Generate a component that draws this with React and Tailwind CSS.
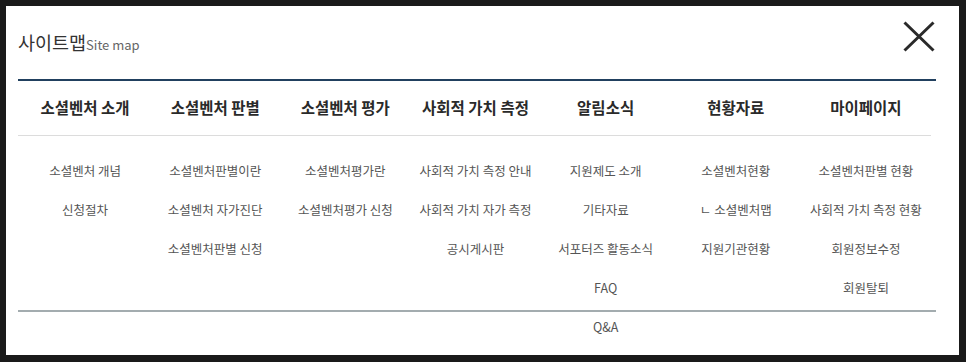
import React from "react";

const cols = [
  { title: "소셜벤처 소개", items: ["소셜벤처 개념", "신청절차"] },
  { title: "소셜벤처 판별", items: ["소셜벤처판별이란", "소셜벤처 자가진단", "소셜벤처판별 신청"] },
  { title: "소셜벤처 평가", items: ["소셜벤처평가란", "소셜벤처평가 신청"] },
  { title: "사회적 가치 측정", items: ["사회적 가치 측정 안내", "사회적 가치 자가 측정", "공시게시판"] },
  { title: "알림소식", items: ["지원제도 소개", "기타자료", "서포터즈 활동소식", "FAQ", "Q&A"] },
  { title: "현황자료", items: ["소셜벤처현황", "ㄴ 소셜벤처맵", "지원기관현황"] },
  { title: "마이페이지", items: ["소셜벤처판별 현황", "사회적 가치 측정 현황", "회원정보수정", "회원탈퇴"] },
];

export default function App() {
  return (
    <div
      className="w-[966px] h-[362px] bg-[#1a1a1a] pt-[6px] pl-[6px]"
      style={{ fontFamily: '"Noto Sans CJK KR", "Noto Sans", sans-serif' }}
    >
      <div className="w-[953px] h-[349px] bg-white pl-[12px] pr-[23px] flex flex-col">
        <div className="h-[73px] flex items-start justify-between">
          <div className="mt-[27px] flex items-baseline text-[#333]">
            <span className="text-[18.5px] leading-none">사이트맵</span>
            <span className="text-[13px] leading-none text-[#666]">Site map</span>
          </div>
          <svg className="mt-[15px] mr-[1px]" width="32" height="31" viewBox="0 0 32 31">
            <path d="M1.5 1.5 L30.5 29.5 M30.5 1.5 L1.5 29.5" stroke="#2a2a2a" strokeWidth="3" fill="none" />
          </svg>
        </div>
        <div className="border-t-2 border-[#21405f]">
          <div className="mr-[5px] border-b border-[#dcdcdc] grid grid-cols-7 pl-[2px] h-[55px] items-center">
            {cols.map((c) => (
              <div key={c.title} className="text-center text-[15.5px] font-bold text-[#2a2a2a] leading-none">
                {c.title}
              </div>
            ))}
          </div>
          <div className="h-[176px] border-b-2 border-[#a3acaf] grid grid-cols-7 pl-[2px] pr-[5px] pt-[16px] items-start">
            {cols.map((c) => (
              <div key={c.title} className="flex flex-col items-center">
                {c.items.map((it) => (
                  <div key={it} className="h-[39px] flex items-center text-[12.5px] text-[#555] whitespace-nowrap">
                    {it}
                  </div>
                ))}
              </div>
            ))}
          </div>
        </div>
      </div>
    </div>
  );
}
